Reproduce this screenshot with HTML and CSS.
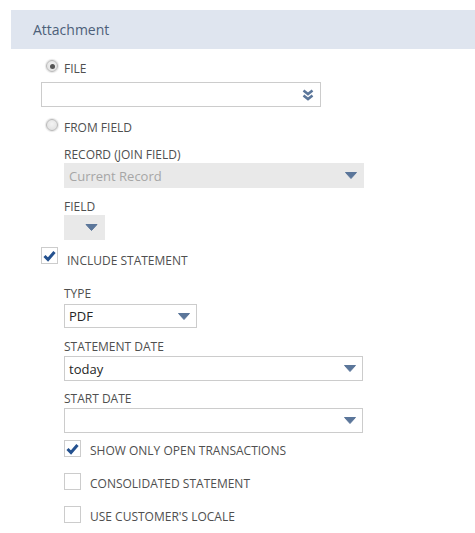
FILE: index.html
```html
<!DOCTYPE html>
<html>
<head>
<meta charset="utf-8">
<link rel="stylesheet" href="styles.css">
</head>
<body>
<div class="header">Attachment</div>
<div class="form">
  <div class="radio-row row-file">
    <span class="radio checked"></span>
    <span class="lbl">FILE</span>
  </div>
  <div class="file-input">
    <svg class="dbl" width="12" height="12" viewBox="0 0 12 12"><polyline points="1.5,1.5 6,5 10.5,1.5" fill="none" stroke="#5b769a" stroke-width="2.6"/><polyline points="1.5,6.5 6,10 10.5,6.5" fill="none" stroke="#5b769a" stroke-width="2.6"/></svg>
  </div>
  <div class="radio-row row-from">
    <span class="radio"></span>
    <span class="lbl">FROM FIELD</span>
  </div>
  <div class="sub">
    <div class="flabel l-record">RECORD (JOIN FIELD)</div>
    <div class="select disabled w300"><span class="val muted">Current Record</span><svg class="tri" width="12" height="7" viewBox="0 0 12 7"><polygon points="0.5,0.5 11.5,0.5 6,6.5" fill="#5b769a" stroke="#5b769a" stroke-linejoin="round"/></svg></div>
    <div class="flabel l-field">FIELD</div>
    <div class="select disabled w41 field-box"><svg class="tri" width="13" height="7" viewBox="0 0 12 7"><polygon points="0.5,0.5 11.5,0.5 6,6.5" fill="#5b769a" stroke="#5b769a" stroke-linejoin="round"/></svg></div>
  </div>
  <div class="check-row row-include">
    <span class="checkbox"><svg width="13" height="12" viewBox="0 0 13 12"><polyline points="1.5,6 5,9.5 11.5,2" fill="none" stroke="#24518f" stroke-width="3"/></svg></span>
    <span class="lbl">INCLUDE STATEMENT</span>
  </div>
  <div class="sub">
    <div class="flabel l-type">TYPE</div>
    <div class="select w133 type-box"><span class="val">PDF</span><svg class="tri" width="12" height="7" viewBox="0 0 12 7"><polygon points="0.5,0.5 11.5,0.5 6,6.5" fill="#5b769a" stroke="#5b769a" stroke-linejoin="round"/></svg></div>
    <div class="flabel l-sdate">STATEMENT DATE</div>
    <div class="select w299"><span class="val">today</span><svg class="tri" width="12" height="7" viewBox="0 0 12 7"><polygon points="0.5,0.5 11.5,0.5 6,6.5" fill="#5b769a" stroke="#5b769a" stroke-linejoin="round"/></svg></div>
    <div class="flabel l-start">START DATE</div>
    <div class="select w299"><span class="val"></span><svg class="tri" width="12" height="7" viewBox="0 0 12 7"><polygon points="0.5,0.5 11.5,0.5 6,6.5" fill="#5b769a" stroke="#5b769a" stroke-linejoin="round"/></svg></div>
    <div class="checks">
      <div class="check-row small">
        <span class="checkbox"><svg width="13" height="12" viewBox="0 0 13 12"><polyline points="1.5,6 5,9.5 11.5,2" fill="none" stroke="#24518f" stroke-width="3"/></svg></span>
        <span class="lbl">SHOW ONLY OPEN TRANSACTIONS</span>
      </div>
      <div class="check-row small">
        <span class="checkbox"></span>
        <span class="lbl">CONSOLIDATED STATEMENT</span>
      </div>
      <div class="check-row small">
        <span class="checkbox"></span>
        <span class="lbl">USE CUSTOMER'S LOCALE</span>
      </div>
    </div>
  </div>
</div>
</body>
</html>
```
FILE: styles.css
```css
html, body {
  margin: 0;
  padding: 0;
  background: #ffffff;
}
body {
  font-family: "Open Sans", "Liberation Sans", sans-serif;
  font-size: 12px;
  color: #555;
}
.header {
  margin: 10px 0 0 11px;
  height: 39px;
  background: #dfe5ef;
  padding-left: 22px;
  display: flex;
  align-items: center;
  font-size: 14px;
  color: #4d5f79;
}
.form {
  padding-left: 41px;
}
.lbl, .flabel {
  font-size: 12px;
  line-height: 16px;
  color: #4f4f4f;
  white-space: nowrap;
}
.radio-row {
  display: flex;
  align-items: flex-start;
  height: 16px;
}
.radio-row .lbl {
  margin-top: 1px;
}
.radio-row .radio {
  width: 10px;
  height: 10px;
  margin: 0 6px 0 5px;
  border-radius: 50%;
  border: 1px solid #b9b9b9;
  background: radial-gradient(circle at 50% 40%, #f4f4f4 0%, #dcdcdc 100%);
  box-shadow: 0 0 1px 1px #e6e6e6;
  display: flex;
  align-items: center;
  justify-content: center;
}
.radio.checked::after {
  content: "";
  width: 5px;
  height: 5px;
  border-radius: 50%;
  background: #555;
}
.row-file { margin-top: 11px; }
.row-from { margin-top: 12px; }
.file-input {
  margin-top: 6px;
  width: 280px;
  height: 25px;
  box-sizing: border-box;
  border: 1px solid #cccccc;
  display: flex;
  align-items: center;
  justify-content: flex-end;
  padding-right: 6px;
}
.sub {
  padding-left: 23px;
}
.l-record { margin-top: 12px; }
.l-field { margin-top: 11px; }
.l-type { margin-top: 17px; }
.l-sdate { margin-top: 11px; }
.l-start { margin-top: 10px; }
.select {
  height: 25px;
  box-sizing: border-box;
  border: 1px solid #cccccc;
  display: flex;
  align-items: center;
  justify-content: space-between;
  padding: 0 6px 0 4px;
  margin-top: 1px;
}
.select.disabled {
  border-color: #e9e9e9;
  background: #e9e9e9;
}
.field-box {
  margin-top: 0;
  justify-content: flex-end;
}
.type-box {
  height: 24px;
  margin-top: 2px;
}
.w300 { width: 300px; margin-top: 0; }
.w299 { width: 299px; }
.w41 { width: 41px; }
.w133 { width: 133px; }
.val {
  font-size: 13px;
  color: #262626;
}
.val.muted {
  color: #a6a6a6;
}
.check-row {
  display: flex;
  align-items: flex-start;
}
.checkbox {
  width: 17px;
  height: 17px;
  box-sizing: border-box;
  border: 1px solid #cccccc;
  background: #fff;
  display: flex;
  align-items: center;
  justify-content: center;
  margin-right: 9px;
  flex-shrink: 0;
}
.row-include {
  margin-top: 7px;
}
.row-include .lbl {
  margin-top: 6px;
}
.checks {
  margin-top: 7px;
  display: flex;
  flex-direction: column;
  gap: 14px;
}
.check-row.small .lbl {
  margin-top: 3px;
}
```
